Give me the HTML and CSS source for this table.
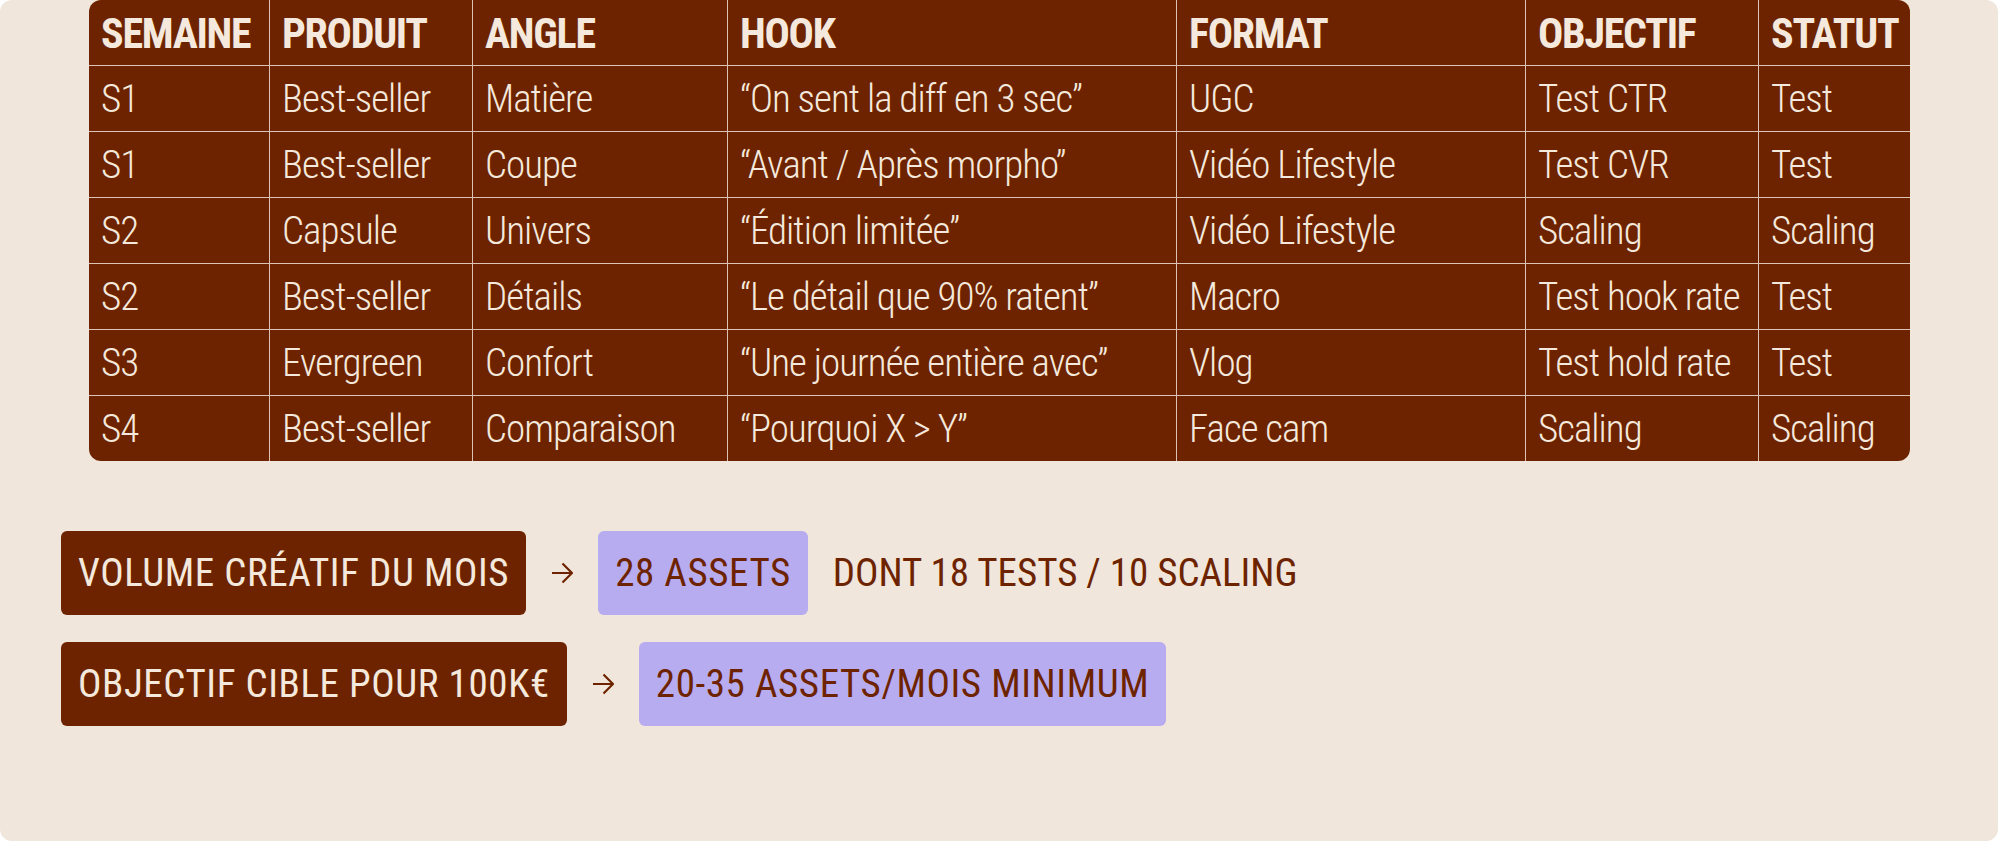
FILE: index.html
```html
<!DOCTYPE html>
<html lang="fr">
<head>
<meta charset="utf-8">
<title>Plan créatif</title>
<link rel="stylesheet" href="styles.css">
</head>
<body>
<div class="page">
  <div class="grid" role="table">
    <div class="cell head">SEMAINE</div>
    <div class="cell head">PRODUIT</div>
    <div class="cell head">ANGLE</div>
    <div class="cell head">HOOK</div>
    <div class="cell head">FORMAT</div>
    <div class="cell head">OBJECTIF</div>
    <div class="cell head">STATUT</div>

    <div class="cell">S1</div>
    <div class="cell">Best-seller</div>
    <div class="cell">Matière</div>
    <div class="cell">“On sent la diff en 3 sec”</div>
    <div class="cell">UGC</div>
    <div class="cell">Test CTR</div>
    <div class="cell">Test</div>

    <div class="cell">S1</div>
    <div class="cell">Best-seller</div>
    <div class="cell">Coupe</div>
    <div class="cell">“Avant / Après morpho”</div>
    <div class="cell">Vidéo Lifestyle</div>
    <div class="cell">Test CVR</div>
    <div class="cell">Test</div>

    <div class="cell">S2</div>
    <div class="cell">Capsule</div>
    <div class="cell">Univers</div>
    <div class="cell">“Édition limitée”</div>
    <div class="cell">Vidéo Lifestyle</div>
    <div class="cell">Scaling</div>
    <div class="cell">Scaling</div>

    <div class="cell">S2</div>
    <div class="cell">Best-seller</div>
    <div class="cell">Détails</div>
    <div class="cell">“Le détail que 90% ratent”</div>
    <div class="cell">Macro</div>
    <div class="cell">Test hook rate</div>
    <div class="cell">Test</div>

    <div class="cell">S3</div>
    <div class="cell">Evergreen</div>
    <div class="cell">Confort</div>
    <div class="cell">“Une journée entière avec”</div>
    <div class="cell">Vlog</div>
    <div class="cell">Test hold rate</div>
    <div class="cell">Test</div>

    <div class="cell">S4</div>
    <div class="cell">Best-seller</div>
    <div class="cell">Comparaison</div>
    <div class="cell">“Pourquoi X &gt; Y”</div>
    <div class="cell">Face cam</div>
    <div class="cell">Scaling</div>
    <div class="cell">Scaling</div>
  </div>

  <div class="summary">
    <div class="line">
      <span class="tag dark">VOLUME CRÉATIF DU MOIS</span>
      <svg class="arrow" viewBox="0 0 22 24" width="22" height="24" aria-hidden="true"><path d="M1 12H20.5M11.5 2.5L21 12L11.5 21.5" fill="none" stroke="#6E2300" stroke-width="2.2"/></svg>
      <span class="tag light">28 ASSETS</span>
      <span class="note">DONT 18 TESTS / 10 SCALING</span>
    </div>
    <div class="line">
      <span class="tag dark">OBJECTIF CIBLE POUR 100K€</span>
      <svg class="arrow" viewBox="0 0 22 24" width="22" height="24" aria-hidden="true"><path d="M1 12H20.5M11.5 2.5L21 12L11.5 21.5" fill="none" stroke="#6E2300" stroke-width="2.2"/></svg>
      <span class="tag light">20-35 ASSETS/MOIS MINIMUM</span>
    </div>
  </div>
</div>
</body>
</html>
```

FILE: styles.css
```css
html, body {
  margin: 0;
  padding: 0;
}

body {
  background: #ffffff;
  font-family: "Liberation Sans Narrow", "Roboto Condensed", "Liberation Sans", Arial, sans-serif;
}

.page {
  box-sizing: border-box;
  width: 1998px;
  height: 841px;
  background: #F0E6DB;
  border-radius: 12px;
  padding-left: 61px;
  overflow: hidden;
}

.grid {
  display: grid;
  grid-template-columns: 181px 203px 255px 449px 349px 233px 151px;
  width: 1821px;
  margin-left: 28px;
  background: #6E2300;
  border-radius: 12px;
  overflow: hidden;
  color: #F4E9DC;
}

.cell {
  box-sizing: border-box;
  height: 66px;
  padding: 2px 0 0 12px;
  line-height: 63px;
  font-size: 39px;
  font-weight: 300;
  letter-spacing: -0.025em;
  white-space: nowrap;
  border-right: 1px solid #DCC3B3;
  border-bottom: 1px solid #DCC3B3;
}

.cell:nth-child(7n) {
  border-right: none;
}

.cell:nth-last-child(-n+7) {
  height: 65px;
  border-bottom: none;
}

.head {
  font-size: 42px;
  font-weight: bold;
  letter-spacing: -0.03em;
}

.summary {
  display: flex;
  flex-direction: column;
  gap: 27px;
  margin-top: 70px;
}

.line {
  display: flex;
  align-items: center;
  gap: 25px;
}

.tag {
  height: 84px;
  line-height: 84px;
  padding: 0 17px;
  border-radius: 6px;
  font-size: 39px;
  letter-spacing: 0.015em;
  white-space: nowrap;
}

.tag.dark {
  background: #6E2300;
  color: #F4E9DC;
}

.tag.light {
  background: #B7ACEF;
  color: #6E2300;
}

.note {
  font-size: 39px;
  line-height: 84px;
  color: #6E2300;
  white-space: nowrap;
}

.arrow {
  display: block;
  flex: none;
}
```
